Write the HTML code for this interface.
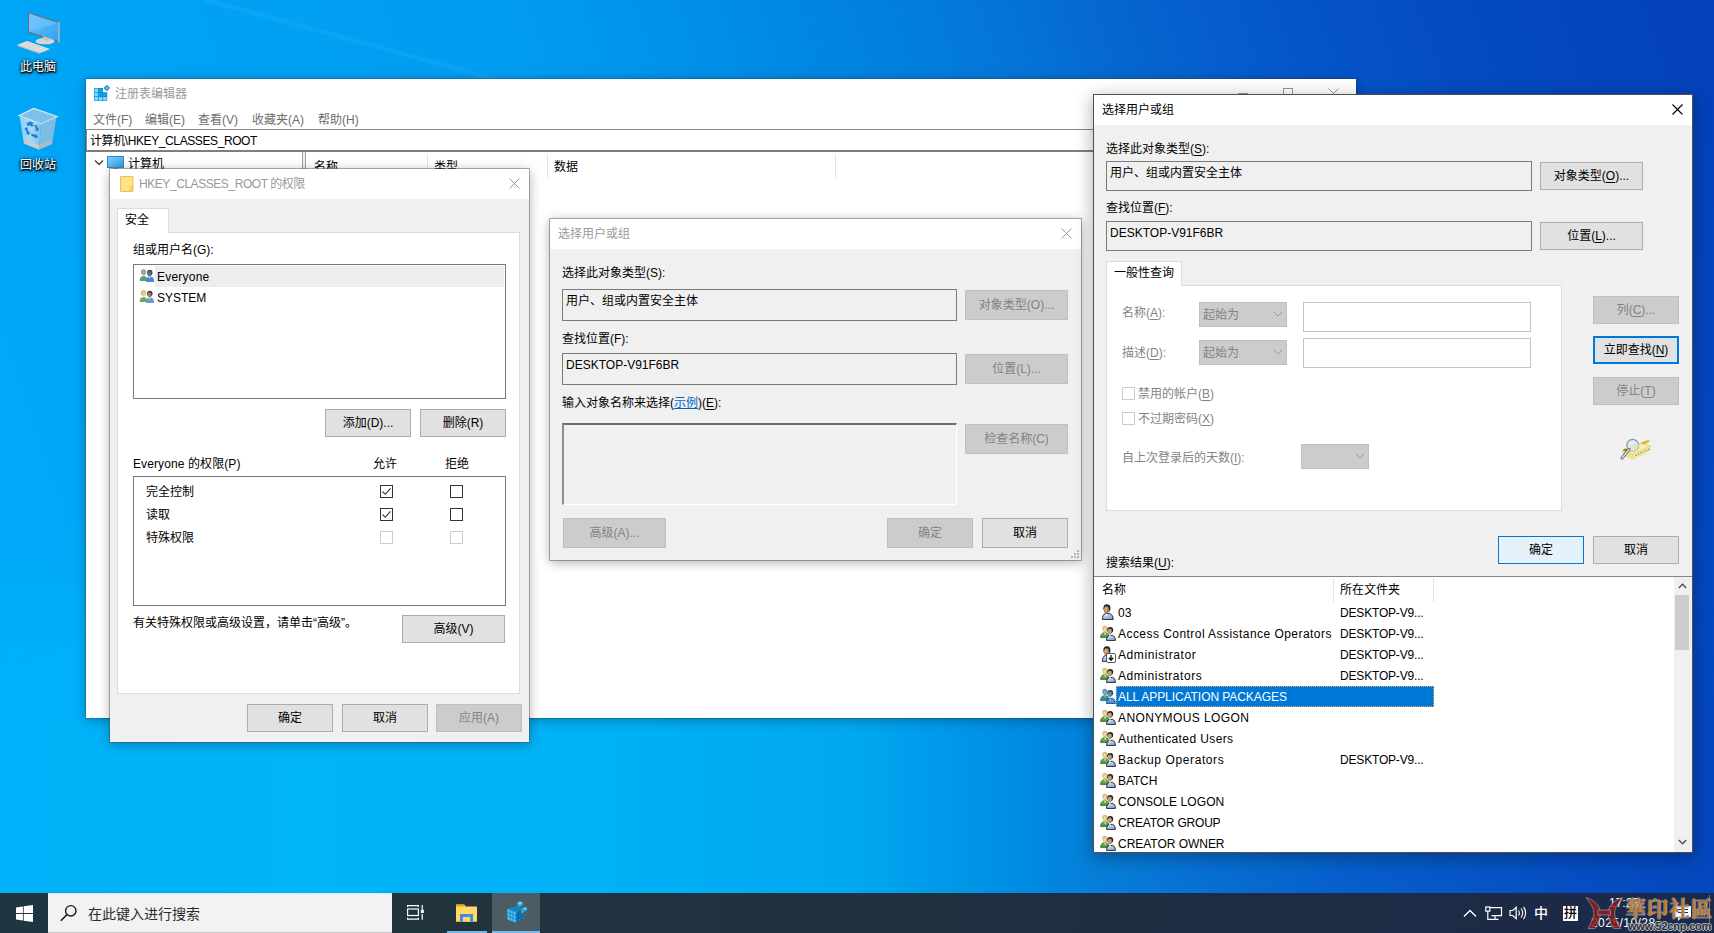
<!DOCTYPE html>
<html lang="zh-CN">
<head>
<meta charset="utf-8">
<title>desktop</title>
<style>
*{box-sizing:border-box;margin:0;padding:0}
html,body{width:1714px;height:933px;overflow:hidden}
body{position:relative;font-family:"Liberation Sans","Noto Sans CJK SC",sans-serif;font-size:12px;color:#000;background:#0a78d8}
#bg{position:absolute;left:0;top:0;width:1714px;height:933px;
background:
 radial-gradient(ellipse 1050px 640px at 380px 960px, rgba(0,200,255,.50), rgba(0,200,255,.30) 45%, rgba(0,200,255,0) 75%),
 linear-gradient(71deg,#00acf9 0%,#00a8f7 10%,#00a3f5 20%,#00a0f3 30%,#009cf0 40%,#0092e9 48%,#0088e2 54%,#027edc 60%,#0476d8 64%,#0666d0 70%,#0556c8 79%,#044ac1 87%,#0340ba 100%);}
#bg2{position:absolute;left:0;top:560px;width:1714px;height:333px;
background:linear-gradient(90deg,#00b0f8 0,#00b4f8 300px,#00b1f6 600px,#00a8f1 850px,#0098e9 950px,#0088e0 1040px,#067ed9 1100px,#0770d3 1200px,#065ecb 1350px,#054fc3 1550px,#0446bd 1714px);
-webkit-mask-image:linear-gradient(180deg,rgba(0,0,0,0) 0,rgba(0,0,0,.6) 110px,#000 170px);mask-image:linear-gradient(180deg,rgba(0,0,0,0) 0,rgba(0,0,0,.6) 110px,#000 170px)}
.a{position:absolute}
.win{position:absolute;background:#f0f0f0}
.t{position:absolute;white-space:nowrap;line-height:16px;height:16px}
.g{color:#838383}
.btn{position:absolute;border:1px solid #adadad;background:#e1e1e1;text-align:center;white-space:nowrap;height:28px;line-height:27px;width:86px}
.btn.dis{background:#cccccc;border-color:#bfbfbf;color:#838383}
.field{position:absolute;border:1px solid #7a7a7a;background:#f0f0f0;padding:3px 0 0 3px;line-height:16px;white-space:nowrap}
.cb{position:absolute;width:13px;height:13px;border:1px solid #333;background:#fff}
.cb.dis{border-color:#cccccc}
.combo{position:absolute;height:25px;border:1px solid #bfbfbf;background:#cccccc;color:#838383;padding:4px 0 0 3px;line-height:16px}
.row{position:absolute;left:0;height:21px;width:100%}
.row .t{top:3px}
u{text-decoration:underline;text-underline-offset:1.5px;text-decoration-thickness:1px}
.dt{position:absolute;color:#fff;text-align:center;font-size:12px;line-height:14px;white-space:nowrap;text-shadow:0 1px 2px #000,0 1px 3px rgba(0,0,0,.9),1px 1px 1px rgba(0,0,0,.85),0 0 4px rgba(0,0,0,.6)}
</style>
</head>
<body>
<div id="bg"></div>
<div id="bg2"></div>
<div class="a" style="left:205px;top:-4px;width:320px;height:7px;transform-origin:0 0;transform:rotate(15.3deg);background:linear-gradient(180deg,rgba(140,220,255,0),rgba(140,220,255,.10) 50%,rgba(140,220,255,0))"></div>
<!-- shared svg symbols -->
<svg width="0" height="0" style="position:absolute">
  <defs>
    <filter id="selblue" color-interpolation-filters="sRGB"><feColorMatrix type="matrix" values=".5 0 0 0 0  0 .5 0 0 .235  0 0 .5 0 .42  0 0 0 1 0"/></filter>
    <radialGradient id="fc1" cx=".4" cy=".4" r=".7"><stop offset="0" stop-color="#e2b98a"/><stop offset="1" stop-color="#9a6a3c"/></radialGradient>
    <radialGradient id="fc2" cx=".4" cy=".4" r=".7"><stop offset="0" stop-color="#fbe3c4"/><stop offset="1" stop-color="#d9a878"/></radialGradient>
    <linearGradient id="bl" x1="0" y1="0" x2="1" y2="1"><stop offset="0" stop-color="#c4dcf6"/><stop offset="1" stop-color="#7fa9db"/></linearGradient>
    <linearGradient id="gr" x1="0" y1="0" x2="0" y2="1"><stop offset="0" stop-color="#7cc05a"/><stop offset="1" stop-color="#3f8a2c"/></linearGradient>
    <symbol id="grp" viewBox="0 0 16 16">
      <path d="M.6 12.600c0-2.600 1-4.400 3-4.800h2.800c1.600 .4 2.600 2 2.600 4.800z" fill="url(#gr)" stroke="#2c5a1e" stroke-width=".7"/>
      <ellipse cx="4.900" cy="3.600" rx="2.700" ry="2.900" fill="#d9c36a"/>
      <ellipse cx="5" cy="4.700" rx="1.900" ry="2.500" fill="url(#fc2)"/>
      <path d="M4.300 7.800l.8 2.600 .8-2.600z" fill="#fff"/>
      <path d="M6.600 15.400c0-2.800 .9-4.600 2.600-5h3.400c1.800 .6 2.800 2.400 2.800 5z" fill="url(#bl)" stroke="#151515" stroke-width=".9"/>
      <ellipse cx="10.200" cy="5" rx="3" ry="3.100" fill="#232323"/>
      <ellipse cx="9.900" cy="6.300" rx="2.100" ry="2.700" fill="url(#fc1)"/>
      <path d="M9.100 10.300l.9 2.600 .9-2.600z" fill="#fff"/>
    </symbol>
    <symbol id="grp2" viewBox="0 0 16 16">
      <path d="M.2 12.800c0-3 1-4.800 2.800-5.200h2.800c1.600 .4 2.600 2.200 2.600 5.200z" fill="#6fac4c"/>
      <ellipse cx="4.300" cy="3.300" rx="2.800" ry="3" fill="#c9b877"/>
      <ellipse cx="4.600" cy="4.500" rx="1.900" ry="2.600" fill="#ebcba2"/>
      <path d="M7 13.800c0-3.200 1-5.200 2.800-5.600h3c1.900 .5 2.900 2.400 2.900 5.600z" fill="#6c9bd0"/>
      <ellipse cx="11" cy="3.900" rx="2.900" ry="3" fill="#47352a"/>
      <ellipse cx="10.700" cy="5.200" rx="2" ry="2.700" fill="#ab7a52"/>
      <path d="M9.900 8.300l.9 2.400 .9-2.400z" fill="#dfe9f5"/>
    </symbol>
    <symbol id="grp2s" viewBox="0 0 16 16">
      <path d="M.2 12.800c0-3 1-4.800 2.800-5.200h2.800c1.600 .4 2.600 2.200 2.600 5.200z" fill="#5f9d68"/>
      <ellipse cx="4.300" cy="3.300" rx="2.800" ry="3" fill="#8fa596"/>
      <ellipse cx="4.600" cy="4.500" rx="1.900" ry="2.600" fill="#a3a8a8"/>
      <path d="M7 13.800c0-3.200 1-5.200 2.800-5.600h3c1.900 .5 2.900 2.400 2.900 5.600z" fill="#4a8bcf"/>
      <ellipse cx="11" cy="3.900" rx="2.900" ry="3" fill="#2d4f73"/>
      <ellipse cx="10.700" cy="5.200" rx="2" ry="2.700" fill="#5d6f80"/>
      <path d="M9.900 8.300l.9 2.400 .9-2.400z" fill="#cfe0f2"/>
    </symbol>
    <symbol id="usr" viewBox="0 0 16 16">
      <path d="M2.400 15.400c0-3.200 1-5.400 3-6h4c2.400 .8 3.800 2.800 3.800 6z" fill="url(#bl)" stroke="#151515" stroke-width=".9"/>
      <ellipse cx="6.900" cy="4.200" rx="3.500" ry="3.900" fill="#232323"/>
      <ellipse cx="6.500" cy="5.700" rx="2.500" ry="3.400" fill="url(#fc1)"/>
      <path d="M5.400 9.800l1.100 3.200 1.100-3.200z" fill="#fff"/>
    </symbol>
  </defs>
</svg>
<!-- desktop icons -->
<svg class="a" style="left:14px;top:8px" width="50" height="48" viewBox="0 0 50 48">
  <defs><linearGradient id="scr" x1="0" y1="0" x2="1" y2="1"><stop offset="0" stop-color="#6cc4ff"/><stop offset="1" stop-color="#2fa2f4"/></linearGradient></defs>
  <polygon points="14,4 45,14 45,34.5 14,24.5" fill="#6f6f6f"/>
  <polygon points="15,5.6 44,15 44,33 15,23.4" fill="url(#scr)"/>
  <polygon points="15,5.6 44,15 15,23.4" fill="#7ccaff" opacity=".45"/>
  <polygon points="44.2,14.2 45.6,13.6 45.6,34.2 44.2,34.8" fill="#bdbdbd"/>
  <ellipse cx="31" cy="33.2" rx="9.5" ry="3.1" fill="#d6d6d6"/>
  <polygon points="29,28 35,30 35,33 29,32" fill="#c4c4c4"/>
  <polygon points="3,37 13,33 36,41 26,45" fill="#e6e6e6"/>
  <polygon points="3,37 26,45 26,46 3,38" fill="#bdbdbd"/>
  <g stroke="#c9c9c9" stroke-width=".6"><line x1="6" y1="36" x2="29" y2="44"/><line x1="9" y1="35" x2="32" y2="43"/><line x1="11.5" y1="34" x2="34.5" y2="42"/><line x1="8" y1="38.8" x2="17" y2="34.6"/><line x1="13" y1="40.5" x2="22" y2="36.4"/><line x1="18" y1="42.2" x2="27" y2="38.1"/><line x1="23" y1="44" x2="32" y2="39.8"/></g>
</svg>
<div class="dt" style="left:0;top:60px;width:76px">此电脑</div>
<svg class="a" style="left:17px;top:106px" width="42" height="46" viewBox="0 0 42 46">
  <defs><linearGradient id="bin" x1="0" y1="0" x2="1" y2="0"><stop offset="0" stop-color="#9fd3f3"/><stop offset=".5" stop-color="#b8def5"/><stop offset="1" stop-color="#8fc4e6"/></linearGradient></defs>
  <polygon points="2,9.5 17,2.5 40,10.5 24,18" fill="#7fc0e8" stroke="#d8eefb" stroke-width="1.2"/>
  <polygon points="2.5,10 24,18 22,43.5 7,37.5" fill="url(#bin)" opacity=".92"/>
  <polygon points="24,18 39.5,11 35,38 22,43.5" fill="#86bfe3" opacity=".92"/>
  <polygon points="6.5,33.5 21.8,39 22,43.5 7,37.5" fill="#c9cdd2"/>
  <polygon points="21.8,39 35.4,33.5 35,38 22,43.5" fill="#b3b8bf"/>
  <g fill="#1f7fe0"><path d="M9.5 17.5l3.5-2.2 3.5 1.6-1.2 1.8 2.6 1-4 .8-1.2-1.4-2 1.2z"/><path d="M7.5 22.5l2.6-1.4 1.4 4.8 1.8-.4-1.2 3.6-3.4-1.6 1.2-.8z"/><path d="M14.5 27.5l4.2 1.6.4-1.6 2 3.6-3.2 1.6-.2-1.6-3.4-1.2z"/><path d="M17.5 19.5l1.5 4-1.6.8 3.8 1 .8-4-1.4.6-1-2.8z"/></g>
</svg>
<div class="dt" style="left:0;top:158px;width:76px">回收站</div>
<!-- regedit window -->
<div class="win" style="left:86px;top:79px;width:1270px;height:639px;background:#fff;box-shadow:0 0 0 1px rgba(40,60,90,.32),0 2px 11px 0 rgba(0,0,0,.30)">
  <svg class="a" style="left:8px;top:6px" width="16" height="16" viewBox="0 0 16 16">
    <path d="M0 3h8.900v4.300h4.300v8.700h-13.200z" fill="#0a84c6"/>
    <g fill="#7fdcff"><rect x=".5" y="3.500" width="3.600" height="3.600"/><rect x=".5" y="7.800" width="3.600" height="3.600"/><rect x=".5" y="12.100" width="3.600" height="3.400"/><rect x="4.800" y="12.100" width="3.600" height="3.400"/><rect x="9.100" y="12.100" width="3.600" height="3.400"/></g>
    <g fill="#18a4e0"><rect x="4.800" y="3.500" width="3.600" height="3.600"/><rect x="4.800" y="7.800" width="3.600" height="3.600"/><rect x="9.100" y="7.800" width="3.600" height="3.600"/></g>
    <polygon points="12.800,-.2 16,3 12.800,6.200 9.600,3" fill="#0a84c6"/><polygon points="12.800,1.500 14.300,3 12.800,4.500 11.300,3" fill="#7fdcff"/>
  </svg>
  <div class="t" style="left:29px;top:7px;color:#999">注册表编辑器</div>
  <!-- caption buttons (inactive) -->
  <div class="a" style="left:1152px;top:14px;width:10px;height:1px;background:#999"></div>
  <div class="a" style="left:1197px;top:9px;width:10px;height:10px;border:1px solid #999"></div>
  <svg class="a" style="left:1242px;top:9px" width="11" height="11" viewBox="0 0 11 11"><path d="M.5 .5l10 10M10.5 .5l-10 10" stroke="#999" stroke-width="1" fill="none"/></svg>
  <!-- menu -->
  <div class="t" style="left:7px;top:33px;color:#6d6d6d">文件(F)</div>
  <div class="t" style="left:59px;top:33px;color:#6d6d6d">编辑(E)</div>
  <div class="t" style="left:112px;top:33px;color:#6d6d6d">查看(V)</div>
  <div class="t" style="left:166px;top:33px;color:#6d6d6d">收藏夹(A)</div>
  <div class="t" style="left:232px;top:33px;color:#6d6d6d">帮助(H)</div>
  <!-- address bar -->
  <div class="a" style="left:0;top:50px;width:1270px;height:23px;border-top:1px solid #8a8a8a;border-bottom:2px solid #7d7d7d;border-left:1px solid #8a8a8a;background:#fff"></div>
  <div class="t" style="left:4px;top:54px;letter-spacing:-.4px">计算机\HKEY_CLASSES_ROOT</div>
  <!-- tree -->
  <svg class="a" style="left:8px;top:80px" width="10" height="8" viewBox="0 0 10 8"><path d="M1 1.500l4 4 4-4" stroke="#404040" stroke-width="1.300" fill="none"/></svg>
  <svg class="a" style="left:21px;top:76px" width="17" height="16" viewBox="0 0 17 16">
    <defs><linearGradient id="mon" x1="0" y1="0" x2="1" y2="1"><stop offset="0" stop-color="#7fd0ff"/><stop offset="1" stop-color="#2e9be8"/></linearGradient></defs>
    <rect x=".5" y="1.500" width="16" height="11" fill="url(#mon)" stroke="#3a86c4" stroke-width="1"/>
    <rect x="6" y="13" width="5" height="1.500" fill="#9aa4ad"/><rect x="4" y="14.500" width="9" height="1" fill="#9aa4ad"/>
  </svg>
  <div class="t" style="left:42px;top:77px">计算机</div>
  <!-- splitter -->
  <div class="a" style="left:216px;top:73px;width:4px;height:566px;background:#f0f0f0;border-left:1px solid #a0a0a0;border-right:1px solid #a0a0a0"></div>
  <!-- list header -->
  <div class="t" style="left:228px;top:80px">名称</div>
  <div class="t" style="left:348px;top:80px">类型</div>
  <div class="t" style="left:468px;top:80px">数据</div>
  <div class="a" style="left:341px;top:75px;width:1px;height:24px;background:#e5e5e5"></div>
  <div class="a" style="left:461px;top:75px;width:1px;height:24px;background:#e5e5e5"></div>
  <div class="a" style="left:749px;top:75px;width:1px;height:24px;background:#e5e5e5"></div>
</div>
<!-- permissions dialog -->
<div class="win" style="left:110px;top:169px;width:419px;height:573px;box-shadow:0 0 0 1px rgba(80,80,80,.45),0 2px 11px 0 rgba(0,0,0,.33)">
  <div class="a" style="left:0;top:0;width:419px;height:30px;background:#fff"></div>
  <svg class="a" style="left:10px;top:6px" width="14" height="18" viewBox="0 0 14 18"><path d="M.5 1.500h12.500v15h-12.500z" fill="#ffe28a" stroke="#e8c24a" stroke-width="1"/><rect x="9.500" y="11" width="3.500" height="5.500" fill="#f7cf5a"/></svg>
  <div class="t" style="left:29px;top:7px;color:#999;letter-spacing:-.44px">HKEY_CLASSES_ROOT 的权限</div>
  <svg class="a" style="left:399px;top:9px" width="11" height="11" viewBox="0 0 11 11"><path d="M.5 .5l10 10M10.5 .5l-10 10" stroke="#999" stroke-width="1" fill="none"/></svg>
  <!-- tab panel -->
  <div class="a" style="left:7px;top:63px;width:403px;height:462px;background:#fff;border:1px solid #dcdcdc"></div>
  <div class="a" style="left:7px;top:39px;width:52px;height:25px;background:#fff;border:1px solid #dcdcdc;border-bottom:none"></div>
  <div class="t" style="left:15px;top:43px">安全</div>
  <div class="t" style="left:23px;top:73px">组或用户名(G):</div>
  <div class="a" style="left:23px;top:95px;width:373px;height:135px;background:#fff;border:1px solid #7a7a7a">
    <div class="a" style="left:21px;top:1px;width:349px;height:21px;background:#ededed"></div>
    <svg class="a" style="left:5px;top:4px" width="16" height="15"><use href="#grp2s"/></svg>
    <div class="t" style="left:23px;top:4px;letter-spacing:.22px">Everyone</div>
    <svg class="a" style="left:5px;top:25px" width="16" height="15"><use href="#grp2"/></svg>
    <div class="t" style="left:23px;top:25px">SYSTEM</div>
  </div>
  <div class="btn" style="left:215px;top:240px">添加(D)...</div>
  <div class="btn" style="left:310px;top:240px">删除(R)</div>
  <div class="t" style="left:23px;top:287px;letter-spacing:.1px">Everyone 的权限(P)</div>
  <div class="t" style="left:263px;top:287px">允许</div>
  <div class="t" style="left:335px;top:287px">拒绝</div>
  <div class="a" style="left:23px;top:307px;width:373px;height:130px;background:#fff;border:1px solid #7a7a7a">
    <div class="t" style="left:12px;top:7px">完全控制</div>
    <div class="t" style="left:12px;top:30px">读取</div>
    <div class="t" style="left:12px;top:53px">特殊权限</div>
    <div class="cb" style="left:246px;top:8px"><svg class="a" style="left:0;top:0" width="11" height="11" viewBox="0 0 11 11"><path d="M1.500 5.500l2.800 2.800 5.200-6" stroke="#333" stroke-width="1.100" fill="none"/></svg></div>
    <div class="cb" style="left:316px;top:8px"></div>
    <div class="cb" style="left:246px;top:31px"><svg class="a" style="left:0;top:0" width="11" height="11" viewBox="0 0 11 11"><path d="M1.500 5.500l2.800 2.800 5.200-6" stroke="#333" stroke-width="1.100" fill="none"/></svg></div>
    <div class="cb" style="left:316px;top:31px"></div>
    <div class="cb dis" style="left:246px;top:54px"></div>
    <div class="cb dis" style="left:316px;top:54px"></div>
  </div>
  <div class="t" style="left:23px;top:446px">有关特殊权限或高级设置，请单击“高级”。</div>
  <div class="btn" style="left:292px;top:446px;width:103px">高级(V)</div>
  <div class="btn" style="left:137px;top:535px">确定</div>
  <div class="btn" style="left:232px;top:535px">取消</div>
  <div class="btn dis" style="left:326px;top:535px">应用(A)</div>
</div>
<!-- select user or group (simple, inactive) -->
<div class="win" style="left:550px;top:219px;width:531px;height:341px;box-shadow:0 0 0 1px rgba(90,90,90,.5),0 2px 11px 0 rgba(0,0,0,.33)">
  <div class="a" style="left:0;top:0;width:531px;height:30px;background:#fff"></div>
  <div class="t" style="left:8px;top:7px;color:#999">选择用户或组</div>
  <svg class="a" style="left:511px;top:9px" width="11" height="11" viewBox="0 0 11 11"><path d="M.5 .5l10 10M10.5 .5l-10 10" stroke="#999" stroke-width="1" fill="none"/></svg>
  <div class="t" style="left:12px;top:46px">选择此对象类型(S):</div>
  <div class="field" style="left:12px;top:70px;width:395px;height:32px">用户、组或内置安全主体</div>
  <div class="btn dis" style="left:415px;top:71px;width:103px;height:30px;line-height:29px">对象类型(O)...</div>
  <div class="t" style="left:12px;top:112px">查找位置(F):</div>
  <div class="field" style="left:12px;top:134px;width:395px;height:32px">DESKTOP-V91F6BR</div>
  <div class="btn dis" style="left:415px;top:135px;width:103px;height:30px;line-height:29px">位置(L)...</div>
  <div class="t" style="left:12px;top:176px">输入对象名称来选择(<span style="color:#0066cc;text-decoration:underline">示例</span>)(<u>E</u>):</div>
  <div class="a" style="left:12px;top:204px;width:395px;height:82px;background:#f0f0f0;border-top:2px solid #6e6e6e;border-left:2px solid #8e8e8e;border-right:1px solid #fff;border-bottom:1px solid #fff"></div>
  <div class="btn dis" style="left:415px;top:205px;width:103px;height:30px;line-height:29px">检查名称(C)</div>
  <div class="btn dis" style="left:13px;top:299px;width:103px;height:30px;line-height:29px">高级(A)...</div>
  <div class="btn dis" style="left:337px;top:299px;height:30px;line-height:29px">确定</div>
  <div class="btn" style="left:432px;top:299px;height:30px;line-height:29px">取消</div>
  <svg class="a" style="left:519px;top:329px" width="11" height="11" viewBox="0 0 11 11"><g fill="#b8b8b8"><rect x="8" y="8" width="2" height="2"/><rect x="8" y="5" width="2" height="2"/><rect x="8" y="2" width="2" height="2"/><rect x="5" y="8" width="2" height="2"/><rect x="5" y="5" width="2" height="2"/><rect x="2" y="8" width="2" height="2"/></g></svg>
</div>
<!-- select user or group (advanced, active) -->
<div class="win" style="left:1094px;top:95px;width:598px;height:757px;box-shadow:0 0 0 1px #4f4f4f,0 4px 16px 2px rgba(0,0,0,.30)">
  <div class="a" style="left:0;top:0;width:598px;height:30px;background:#fff"></div>
  <div class="t" style="left:8px;top:7px">选择用户或组</div>
  <svg class="a" style="left:578px;top:9px" width="11" height="11" viewBox="0 0 11 11"><path d="M.5 .5l10 10M10.5 .5l-10 10" stroke="#000" stroke-width="1.100" fill="none"/></svg>
  <div class="t" style="left:12px;top:46px">选择此对象类型(<u>S</u>):</div>
  <div class="field" style="left:12px;top:66px;width:426px;height:30px">用户、组或内置安全主体</div>
  <div class="btn" style="left:446px;top:67px;width:103px">对象类型(<u>O</u>)...</div>
  <div class="t" style="left:12px;top:105px">查找位置(<u>F</u>):</div>
  <div class="field" style="left:12px;top:126px;width:426px;height:30px">DESKTOP-V91F6BR</div>
  <div class="btn" style="left:446px;top:127px;width:103px">位置(<u>L</u>)...</div>
  <!-- tab -->
  <div class="a" style="left:12px;top:190px;width:456px;height:226px;background:#fff;border:1px solid #dcdcdc"></div>
  <div class="a" style="left:12px;top:166px;width:76px;height:25px;background:#fff;border:1px solid #dcdcdc;border-bottom:none"></div>
  <div class="t" style="left:20px;top:170px">一般性查询</div>
  <div class="t g" style="left:28px;top:210px">名称(<u>A</u>):</div>
  <div class="combo" style="left:105px;top:207px;width:88px">起始为</div>
  <svg class="a" style="left:179px;top:216px" width="10" height="7" viewBox="0 0 10 7"><path d="M1 1l4 4 4-4" stroke="#9a9a9a" stroke-width="1" fill="none"/></svg>
  <div class="a" style="left:209px;top:207px;width:228px;height:30px;background:#fff;border:1px solid #c4c4c4"></div>
  <div class="t g" style="left:28px;top:250px">描述(<u>D</u>):</div>
  <div class="combo" style="left:105px;top:245px;width:88px">起始为</div>
  <svg class="a" style="left:179px;top:254px" width="10" height="7" viewBox="0 0 10 7"><path d="M1 1l4 4 4-4" stroke="#9a9a9a" stroke-width="1" fill="none"/></svg>
  <div class="a" style="left:209px;top:243px;width:228px;height:30px;background:#fff;border:1px solid #c4c4c4"></div>
  <div class="cb dis" style="left:28px;top:292px"></div>
  <div class="t g" style="left:44px;top:291px">禁用的帐户(<u>B</u>)</div>
  <div class="cb dis" style="left:28px;top:317px"></div>
  <div class="t g" style="left:44px;top:316px">不过期密码(<u>X</u>)</div>
  <div class="t g" style="left:28px;top:355px">自上次登录后的天数(<u>I</u>):</div>
  <div class="combo" style="left:207px;top:349px;width:68px"></div>
  <svg class="a" style="left:261px;top:358px" width="10" height="7" viewBox="0 0 10 7"><path d="M1 1l4 4 4-4" stroke="#9a9a9a" stroke-width="1" fill="none"/></svg>
  <div class="btn dis" style="left:499px;top:201px">列(<u>C</u>)...</div>
  <div class="btn" style="left:499px;top:241px;border:2px solid #0078d7;line-height:25px">立即查找(<u>N</u>)</div>
  <div class="btn dis" style="left:499px;top:282px">停止(<u>T</u>)</div>
  <!-- search icon -->
  <svg class="a" style="left:525px;top:342px" width="34" height="26" viewBox="0 0 34 26">
    <polygon points="21,6 29,3 31,4 25,8" fill="#e2b21c"/>
    <polygon points="3.500,13.500 21.500,6.500 31.500,9 13.500,17" fill="#f6efab" stroke="#d9cf7a" stroke-width=".6"/>
    <polygon points="3.500,13.500 6,11.500 9,12.500 13.500,17 13.500,22.500 3.500,18.500" fill="#ece392"/>
    <polygon points="3.500,13.500 6,11.500 9,12.500 7,14.500" fill="#8a8430"/>
    <polygon points="13.500,17 31.500,9 31.500,13 13.500,22.500" fill="#f1e9a0" stroke="#d9cf7a" stroke-width=".5"/>
    <g fill="#7d7a50"><circle cx="17" cy="18.200" r=".7"/><circle cx="19.500" cy="17" r=".7"/><circle cx="22" cy="15.800" r=".7"/><circle cx="24.500" cy="14.600" r=".7"/><circle cx="27" cy="13.400" r=".7"/><circle cx="29.500" cy="12.200" r=".7"/></g>
    <circle cx="13.700" cy="8.200" r="5.800" fill="#d9ecfb" fill-opacity=".85" stroke="#8d96a2" stroke-width="1.300"/>
    <path d="M8.500 10l10-4.500a5.500 5.500 0 0 1 -2 8.500a5.500 5.500 0 0 1 -8 -4z" fill="#dfe3c4" fill-opacity=".8"/>
    <path d="M10 12.500l-7 8.500" stroke="#5f646b" stroke-width="3" stroke-linecap="round"/>
    <path d="M10 12.500l-7 8.500" stroke="#e4e6ea" stroke-width="1.300" stroke-linecap="round"/>
  </svg>
  <div class="btn" style="left:404px;top:441px;background:#e5f1fb;border-color:#0078d7">确定</div>
  <div class="btn" style="left:499px;top:441px">取消</div>
  <div class="t" style="left:12px;top:460px">搜索结果(<u>U</u>):</div>
  <!-- list -->
  <div class="a" style="left:0;top:481px;width:598px;height:276px;background:#fff;border-top:1px solid #828790;overflow:hidden">
    <div class="t" style="left:8px;top:5px">名称</div>
    <div class="t" style="left:246px;top:5px">所在文件夹</div>
    <div class="a" style="left:239px;top:1px;width:1px;height:24px;background:#e5e5e5"></div>
    <div class="a" style="left:339px;top:1px;width:1px;height:24px;background:#e5e5e5"></div>
    <div class="row" style="top:25px"><svg class="a" style="left:6px;top:2px" width="16" height="16"><use href="#usr"/></svg><div class="t" style="left:24px;letter-spacing:0.07px">03</div><div class="t" style="left:246px;letter-spacing:-0.18px">DESKTOP-V9...</div></div>
    <div class="row" style="top:46px"><svg class="a" style="left:6px;top:2px" width="16" height="16"><use href="#grp"/></svg><div class="t" style="left:24px;letter-spacing:0.45px">Access Control Assistance Operators</div><div class="t" style="left:246px;letter-spacing:-0.18px">DESKTOP-V9...</div></div>
    <div class="row" style="top:67px"><svg class="a" style="left:6px;top:2px" width="16" height="16"><use href="#usr"/></svg><svg class="a" style="left:12px;top:9px" width="10" height="10" viewBox="0 0 10 10"><rect x=".5" y=".5" width="9" height="9" rx="1.500" fill="#fff" stroke="#444" stroke-width=".9"/><path d="M5 2v5M2.800 4.800l2.200 2.400 2.200-2.400" stroke="#111" stroke-width="1.300" fill="none"/></svg><div class="t" style="left:24px;letter-spacing:0.58px">Administrator</div><div class="t" style="left:246px;letter-spacing:-0.18px">DESKTOP-V9...</div></div>
    <div class="row" style="top:88px"><svg class="a" style="left:6px;top:2px" width="16" height="16"><use href="#grp"/></svg><div class="t" style="left:24px;letter-spacing:0.54px">Administrators</div><div class="t" style="left:246px;letter-spacing:-0.18px">DESKTOP-V9...</div></div>
    <div class="row" style="top:109px"><div class="a" style="left:22px;top:0;width:318px;height:21px;background:#0078d7;outline:1px dotted #e8a86a;outline-offset:-1px"></div><svg class="a" style="left:6px;top:2px" width="16" height="16"><use href="#grp" filter="url(#selblue)"/></svg><div class="t" style="left:24px;letter-spacing:-0.07px;color:#fff">ALL APPLICATION PACKAGES</div></div>
    <div class="row" style="top:130px"><svg class="a" style="left:6px;top:2px" width="16" height="16"><use href="#grp"/></svg><div class="t" style="left:24px;letter-spacing:0.39px">ANONYMOUS LOGON</div></div>
    <div class="row" style="top:151px"><svg class="a" style="left:6px;top:2px" width="16" height="16"><use href="#grp"/></svg><div class="t" style="left:24px;letter-spacing:0.39px">Authenticated Users</div></div>
    <div class="row" style="top:172px"><svg class="a" style="left:6px;top:2px" width="16" height="16"><use href="#grp"/></svg><div class="t" style="left:24px;letter-spacing:0.6px">Backup Operators</div><div class="t" style="left:246px;letter-spacing:-0.18px">DESKTOP-V9...</div></div>
    <div class="row" style="top:193px"><svg class="a" style="left:6px;top:2px" width="16" height="16"><use href="#grp"/></svg><div class="t" style="left:24px;letter-spacing:-0.11px">BATCH</div></div>
    <div class="row" style="top:214px"><svg class="a" style="left:6px;top:2px" width="16" height="16"><use href="#grp"/></svg><div class="t" style="left:24px;letter-spacing:0.07px">CONSOLE LOGON</div></div>
    <div class="row" style="top:235px"><svg class="a" style="left:6px;top:2px" width="16" height="16"><use href="#grp"/></svg><div class="t" style="left:24px;letter-spacing:-0.19px">CREATOR GROUP</div></div>
    <div class="row" style="top:256px"><svg class="a" style="left:6px;top:2px" width="16" height="16"><use href="#grp"/></svg><div class="t" style="left:24px;letter-spacing:-0.03px">CREATOR OWNER</div></div>
    <!-- scrollbar -->
    <div class="a" style="left:580px;top:0;width:18px;height:276px;background:#f0f0f0"></div>
    <svg class="a" style="left:584px;top:6px" width="9" height="6" viewBox="0 0 9 6"><path d="M.8 5l3.700-3.700 3.700 3.700" stroke="#505050" stroke-width="1.400" fill="none"/></svg>
    <div class="a" style="left:581px;top:18px;width:14px;height:55px;background:#cdcdcd"></div>
    <svg class="a" style="left:584px;top:262px" width="9" height="6" viewBox="0 0 9 6"><path d="M.8 1l3.700 3.700 3.700-3.700" stroke="#505050" stroke-width="1.400" fill="none"/></svg>
  </div>
</div>
<!-- taskbar -->
<div class="a" style="left:0;top:893px;width:1714px;height:40px;background:linear-gradient(90deg,#1f3540 0%,#21343e 30%,#20303f 55%,#1d2b44 75%,#1c2a49 100%)">
  <svg class="a" style="left:16px;top:12px" width="17" height="17" viewBox="0 0 17 17"><path d="M0 2.400l6.900-1v6.700h-6.900zM7.700 1.300l9.300-1.300v8.100h-9.300zM0 8.900h6.900v6.700l-6.900-1zM7.700 8.900h9.300v8.100l-9.300-1.300z" fill="#fff"/></svg>
  <div class="a" style="left:48px;top:0;width:344px;height:40px;background:#f2f2f2;border-top:1px solid #e0e0e0;border-bottom:1px solid #c8c8c8"></div>
  <svg class="a" style="left:60px;top:11px" width="18" height="18" viewBox="0 0 18 18"><circle cx="10.800" cy="6.800" r="5.200" fill="none" stroke="#1a1a1a" stroke-width="1.400"/><path d="M7 10.600l-6.200 6.200" stroke="#1a1a1a" stroke-width="1.500"/></svg>
  <div class="t" style="left:88px;top:11px;font-size:14px;line-height:20px;height:20px;color:#2b2b2b">在此键入进行搜索</div>
  <!-- task view -->
  <svg class="a" style="left:407px;top:11px" width="18" height="17" viewBox="0 0 18 17"><g fill="none" stroke="#fff" stroke-width="1.200"><path d="M.6 1v2M.6 1.600h10.800M11.400 1v2"/><rect x=".6" y="5" width="10.800" height="6.500"/><path d="M.6 15.800v-2M.6 15.200h10.800M11.400 15.800v-2"/><path d="M15.200 1v4.200M15.200 10v5.800"/></g><rect x="13.800" y="5.600" width="3" height="3.400" fill="#fff"/></svg>
  <!-- explorer -->
  <svg class="a" style="left:455px;top:10px" width="23" height="20" viewBox="0 0 23 20"><path d="M1 1.500h8l2 2h11v15h-21z" fill="#ffd65c"/><path d="M1 1.500h8l2 2h-10z" fill="#f0a30a"/><rect x="1" y="5" width="21" height="13.500" fill="#ffd96a"/><path d="M5 18.500v-7.500h13v7.500h-3v-4.500h-7v4.500z" fill="#3f8fe0"/><rect x="8" y="14" width="7" height="4.500" fill="#ffd96a"/></svg>
  <div class="a" style="left:447px;top:38px;width:40px;height:2px;background:#76b9ed"></div>
  <!-- regedit button -->
  <div class="a" style="left:492px;top:0;width:48px;height:40px;background:#4b5c63"></div>
  <div class="a" style="left:492px;top:38px;width:48px;height:2px;background:#76b9ed"></div>
  <svg class="a" style="left:506px;top:7px" width="23" height="24" viewBox="0 0 23 24">
    <polygon points="1.500,9 9.800,6.200 18,9 9.800,12.200" fill="#1d97dc"/>
    <polygon points="1.500,9 9.800,12.200 9.800,22.500 1.500,19.500" fill="#4dcbfb"/>
    <polygon points="9.800,12.200 18,9 18,18.500 9.800,22.500" fill="#0f7cc2"/>
    <g stroke="#1583c7" stroke-width=".9" fill="none"><path d="M1.500 12.500l8.300 3.200M1.500 16l8.300 3.200M4.300 10v10.500M7 11v10.500"/></g>
    <g stroke="#0a5f9a" stroke-width=".9" fill="none"><path d="M9.800 15.700l8.200-3.500M9.800 19.200l8.200-3.700M12.500 11.200v10M15.300 10v10"/></g>
    <g stroke="#1277b8" stroke-width=".8" fill="none"><path d="M4.300 8.100l8.200 3.100M7 7.200l8.300 3M12.500 7.100l-8.200 3M15.300 8l-8.300 3.100"/></g>
    <polygon points="12.500,11.200 15.300,10 15.300,13.400 12.500,14.600" fill="#4b5c63"/><polygon points="15.300,10 18,9 18,12.300 15.300,13.400" fill="#39b6ee"/>
    <polygon points="11,3.400 13.800,1.200 17,2.800 16.600,5.400 13.600,7 11.200,5.800" fill="#2aa8ea"/><polygon points="11,3.400 13.800,1.200 17,2.800 14,4.600" fill="#5fd2fb"/>
    <polygon points="16.400,9 18.500,7 21.300,8.200 21,10.400 18.600,11.600 16.600,10.800" fill="#2aa8ea"/><polygon points="16.400,9 18.500,7 21.300,8.200 19,9.600" fill="#5fd2fb"/>
  </svg>
  <!-- tray -->
  <svg class="a" style="left:1463px;top:16px" width="14" height="9" viewBox="0 0 14 9"><path d="M1 7.500l6-6 6 6" stroke="#fff" stroke-width="1.400" fill="none"/></svg>
  <svg class="a" style="left:1485px;top:13px" width="18" height="15" viewBox="0 0 18 15"><g fill="none" stroke="#fff" stroke-width="1.200"><path d="M4.500 1.600h12v8h-10"/><rect x=".8" y="1" width="4" height="4.200"/><path d="M2.800 5.200v8.200h6M10 9.600v3.800M7.500 13.400h6"/></g></svg>
  <svg class="a" style="left:1509px;top:12px" width="18" height="16" viewBox="0 0 18 16"><g fill="none" stroke="#fff" stroke-width="1.200"><path d="M1 5.500h2.800l3.400-3.200v11.400l-3.400-3.200h-2.800z"/><path d="M9.500 5.500c1 1.400 1 3.600 0 5M12 3.500c2 2.600 2 6.400 0 9M14.500 1.800c2.800 3.600 2.800 8.800 0 12.400" stroke-width="1.100"/></g></svg>
  <div class="t" style="left:1534px;top:10px;font-size:14px;line-height:20px;height:20px;color:#fff;font-weight:500">中</div>
  <div class="a" style="left:1563px;top:13px;width:15px;height:15px;background:#fff;color:#000;font-size:13px;line-height:14px;text-align:center;font-weight:500">拼</div>
  <div class="t" style="left:1609px;top:2px;color:#fff;font-size:12px">17:23</div>
  <div class="t" style="left:1591px;top:22px;color:#fff;font-size:12px;letter-spacing:.45px">2025/10/28</div>
  <svg class="a" style="left:1674px;top:12px" width="18" height="17" viewBox="0 0 18 17"><path d="M1 1h16v11h-9l-4 4v-4h-3z" fill="#fff"/><path d="M4 4.500h10M4 7.500h10" stroke="#1c2a49" stroke-width="1"/></svg>
  <div class="a" style="left:1709px;top:2px;width:1px;height:36px;background:#6d7684"></div>
  <!-- watermark -->
  <svg class="a" style="left:1584px;top:3px" width="41" height="34" viewBox="0 0 41 34"><g fill="#8e1b20" fill-opacity=".84" stroke="#9aa0aa" stroke-opacity=".75" stroke-width=".9"><path d="M2 1.500C6 7 9.500 11 9.800 16.500C10 22 6.500 28 4 32.500L11 32.500C13.500 28 16.600 22 16.400 16.500C16.200 9 9 3.500 2 1.500Z"/><path d="M38.500 1.500C34.500 7 31 11 30.700 16.500C30.500 22 34 28 36.500 32.500L29.500 32.500C27 28 23.900 22 24.100 16.500C24.300 9 31.500 3.500 38.500 1.500Z"/><rect x="14" y="14" width="12.500" height="5"/></g></svg>
  <div class="t" style="left:1625px;top:2px;font-size:21px;line-height:24px;height:24px;font-weight:600;letter-spacing:1px;color:#c87a1c;font-family:'Noto Serif CJK SC','Noto Sans CJK TC',serif;text-shadow:1px 0 0 rgba(152,160,178,.7),-1px 0 0 rgba(152,160,178,.7),0 1px 0 rgba(152,160,178,.7),0 -1px 0 rgba(152,160,178,.7)">華印社區</div>
  <div class="t" style="left:1628px;top:27px;font-size:11px;line-height:12px;height:12px;font-weight:700;letter-spacing:-.2px;color:#2e3138;text-shadow:1px 0 0 #b4b9c2,-1px 0 0 #b4b9c2,0 1px 0 #b4b9c2,0 -1px 0 #b4b9c2">www.52cnp.com</div>
</div>
</body>
</html>
